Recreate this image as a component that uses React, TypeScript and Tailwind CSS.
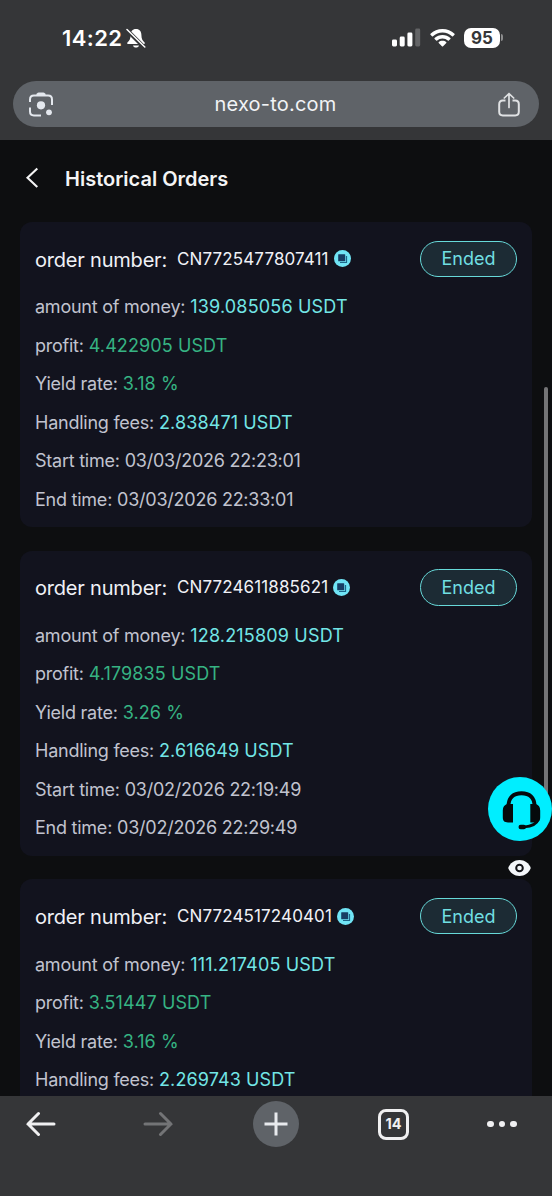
import * as React from 'react';

type Order = {
  id: string;
  amount: string;
  profit: string;
  rate: string;
  fees: string;
  start?: string;
  end?: string;
};

const orders: Order[] = [
  {
    id: 'CN7725477807411',
    amount: '139.085056 USDT',
    profit: '4.422905 USDT',
    rate: '3.18 %',
    fees: '2.838471 USDT',
    start: '03/03/2026 22:23:01',
    end: '03/03/2026 22:33:01',
  },
  {
    id: 'CN7724611885621',
    amount: '128.215809 USDT',
    profit: '4.179835 USDT',
    rate: '3.26 %',
    fees: '2.616649 USDT',
    start: '03/02/2026 22:19:49',
    end: '03/02/2026 22:29:49',
  },
  {
    id: 'CN7724517240401',
    amount: '111.217405 USDT',
    profit: '3.51447 USDT',
    rate: '3.16 %',
    fees: '2.269743 USDT',
  },
];

function StatusBar() {
  return (
    <div className="flex h-[81px] items-start justify-between pt-[24px] pr-[49px] pl-[62px] text-white">
      <div className="flex h-[28px] items-center">
        <span className="w-[64px] text-[22px] font-semibold tracking-[0.4px] whitespace-nowrap">14:22</span>
        <svg width="20" height="21" viewBox="0 0 20 21" fill="none">
          <path
            d="M10 1C6.400 1 4.600 3.600 4.600 7c0 4-1.200 5.600-3 7.300-.9.900-.5 1.700.5 1.700h15.800c1 0 1.400-.8.500-1.700-1.800-1.700-3-3.300-3-7.300C15.400 3.600 13.600 1 10 1zM7 17.400c.4 1.400 1.500 2.200 3 2.200s2.600-.8 3-2.200z"
            fill="#fff"
          />
          <path d="M.3 1.500 18.500 19.700" stroke="#353638" strokeWidth="4" />
          <path d="M1 1.500 18.800 19" stroke="#fff" strokeWidth="1.500" strokeLinecap="round" />
        </svg>
      </div>
      <div className="flex h-[27px] items-center">
        <svg width="29" height="19" viewBox="0 0 29 19" fill="#fff">
          <rect x="0" y="11.500" width="5" height="7" rx="1.400" />
          <rect x="7.700" y="8.500" width="5" height="10" rx="1.400" />
          <rect x="15.400" y="4.500" width="5" height="14" rx="1.400" />
          <rect x="23.200" y="0.500" width="5" height="18" rx="1.400" fillOpacity=".23" />
        </svg>
        <svg className="ml-[9px]" width="25" height="18" viewBox="0 0 25 18" fill="#fff">
          <path d="M12.500 0C7.800 0 3.600 1.800.5 4.700c-.3.300-.3.700 0 1l1.500 1.500c.3.300.7.300 1 0C5.500 4.900 8.800 3.500 12.500 3.500s7 1.400 9.500 3.700c.3.300.7.300 1 0l1.500-1.500c.3-.3.300-.7 0-1C21.400 1.800 17.200 0 12.500 0z" />
          <path d="M12.500 6c-3 0-5.800 1.100-7.900 3-.3.300-.3.700 0 1l1.600 1.500c.3.300.7.300 1 0 1.400-1.200 3.200-2 5.300-2s3.900.8 5.300 2c.3.300.7.300 1 0l1.600-1.500c.3-.3.300-.7 0-1-2.100-1.900-4.900-3-7.900-3z" />
          <path d="M12.500 11.800c-1.500 0-2.800.5-3.800 1.400-.3.300-.3.600 0 .9l3.200 3.200c.4.400.8.400 1.200 0l3.200-3.200c.3-.3.300-.6 0-.9-1-.9-2.300-1.400-3.800-1.400z" />
        </svg>
        <div className="ml-[9px] flex h-[20px] w-[36px] items-center justify-center rounded-[7px] bg-white">
          <span className="pt-px text-[17px] leading-[19px] font-bold text-[#353638]">95</span>
        </div>
        <span className="ml-px h-[7px] w-[2px] rounded-r-full bg-[#8b8c8d]" />
      </div>
    </div>
  );
}

function AddressBar() {
  return (
    <div className="mx-[13px] flex h-[46px] items-center justify-between rounded-full bg-[#5f6368] pr-[19px] pl-[16px]">
      <svg width="24" height="25" viewBox="0 0 24 25" fill="none">
        <path
          d="M1 10V7.500C1 5.200 2.600 3.600 4.900 3.600h14.200C21.400 3.600 23 5.200 23 7.500V13M1 15.500v4c0 2.300 1.600 3.900 3.900 3.900H12"
          stroke="#e4e8ee"
          strokeWidth="2"
        />
        <path d="M6.500 4 8.200 1.300C8.600.700 9 .5 9.700.5h4.600c.7 0 1.100.2 1.500.8L17.500 4z" fill="#e4e8ee" />
        <circle cx="12" cy="13.300" r="4.100" fill="#e4e8ee" />
        <circle cx="20" cy="20.300" r="2.900" fill="#e4e8ee" />
      </svg>
      <span className="text-[20px] tracking-[0.22px] text-[#f1f3f6]">nexo-to.com</span>
      <svg width="22" height="25" viewBox="0 0 22 25" fill="none" stroke="#e0e2e4" strokeWidth="2">
        <path d="M7.500 8.600H4.800C2.500 8.600 1.200 9.900 1.200 12.200v7.600c0 2.300 1.300 3.600 3.600 3.600h12.400c2.300 0 3.600-1.300 3.600-3.600v-7.600c0-2.300-1.300-3.600-3.600-3.600h-2.700" />
        <path d="M11 15.500V2M6.300 6 11 1.600 15.700 6" strokeLinecap="round" strokeWidth="1.700" />
      </svg>
    </div>
  );
}

function CopyIcon() {
  return (
    <svg width="17" height="17" viewBox="0 0 17 17">
      <circle cx="8.500" cy="8.500" r="8.500" fill="#70e4f5" />
      <path d="M6 12.500h6.500V6" fill="none" stroke="#1c6689" strokeWidth="1.200" />
      <rect x="4.200" y="4.200" width="7" height="7" rx=".5" fill="#173d63" />
    </svg>
  );
}

function Row({ label, value, tone }: { label: string; value: string; tone: string }) {
  return (
    <div className="flex h-[38.5px] items-center gap-[5px] text-[18px] whitespace-nowrap">
      <span className="tracking-[-0.24px] text-[#c1c3cf]">{label}</span>
      <span className={tone}>{value}</span>
    </div>
  );
}

function OrderCard({ order }: { order: Order }) {
  return (
    <div className="mx-[20px] h-[305px] shrink-0 rounded-[12px] bg-[#12131e] px-[15px] pt-[18.5px]">
      <div className="mb-[10.5px] flex h-[36.5px] items-center">
        <span className="w-[142px] pt-[2px] text-[20px] tracking-[-0.2px] whitespace-nowrap text-[#f0f1f6]">
          order number:
        </span>
        <span className="pt-px text-[17px] tracking-[0.12px] whitespace-nowrap text-[#f0f1f6]">{order.id}</span>
        <span className="ml-[5px]">
          <CopyIcon />
        </span>
        <span className="ml-auto flex h-full w-[97px] items-center justify-center rounded-full border-[1.5px] border-[#67d9d9] bg-[#1c2b34] text-[18px] text-[#70dfe2]">
          Ended
        </span>
      </div>
      <Row label="amount of money:" value={order.amount} tone="tracking-[0.18px] text-[#72e6e6]" />
      <Row label="profit:" value={order.profit} tone="tracking-[0.1px] text-[#36b383]" />
      <Row label="Yield rate:" value={order.rate} tone="tracking-[0.1px] text-[#36b383]" />
      <Row label="Handling fees:" value={order.fees} tone="tracking-[0.1px] text-[#72e6e6]" />
      {order.start && <Row label="Start time:" value={order.start} tone="tracking-[-0.24px] text-[#c1c3cf]" />}
      {order.end && <Row label="End time:" value={order.end} tone="tracking-[-0.24px] text-[#c1c3cf]" />}
    </div>
  );
}

function SupportButton() {
  return (
    <div className="absolute top-[777px] left-[488px] size-[64px] rounded-full bg-[#00eeff]">
      <svg width="64" height="64" viewBox="0 0 64 64" fill="none">
        <path d="M20.500 29C20.500 20.500 25.500 16.200 33.500 16.200S46.500 20.500 46.500 29" stroke="#050a0c" strokeWidth="3.900" />
        <path d="M50.500 42c-1.500 4.500-6 7.300-14.500 8" stroke="#050a0c" strokeWidth="2.700" />
        <rect x="30.500" y="47.800" width="7.500" height="4.400" rx="2.200" fill="#050a0c" />
        <path
          d="M25 27v18.500h-5c-3.600 0-5.200-1.800-5.200-5.200v-6.800c0-3.600 1.700-5.500 4.200-6.500zM42.300 27v18.500H47c3.600 0 5.200-1.800 5.200-5.200v-6.800c0-3.600-1.700-5.500-4.200-6.500z"
          fill="#050a0c"
        />
      </svg>
    </div>
  );
}

function BottomBar() {
  return (
    <div className="h-[100px] w-full shrink-0 bg-[#353638]">
      <div className="flex h-[56px] items-center">
        <svg className="ml-[26px]" width="30" height="26" viewBox="0 0 30 26" fill="none" stroke="#f0f0f1" strokeWidth="3" strokeLinecap="round">
          <path d="M2 13h26M12.500 2.500 2 13l10.500 10.500" />
        </svg>
        <svg className="ml-[87px]" width="30" height="26" viewBox="0 0 30 26" fill="none" stroke="#737476" strokeWidth="3" strokeLinecap="round">
          <path d="M2 13h26M17.500 2.500 28 13 17.500 23.500" />
        </svg>
        <div className="ml-[80px] flex size-[46px] items-center justify-center rounded-full bg-[#5f6368]">
          <svg width="24" height="24" viewBox="0 0 24 24" stroke="#e8eaed" strokeWidth="3">
            <path d="M12 .5v23M.5 12h23" />
          </svg>
        </div>
        <div className="ml-[79px] flex size-[31px] items-center justify-center rounded-[8px] border-[3px] border-[#f0f0f1]">
          <span className="text-[14.5px] font-bold text-[#f0f0f1]">14</span>
        </div>
        <div className="ml-[78px] flex gap-[5px]">
          <span className="size-[6.5px] rounded-full bg-[#f0f0f1]" />
          <span className="size-[6.5px] rounded-full bg-[#f0f0f1]" />
          <span className="size-[6.5px] rounded-full bg-[#f0f0f1]" />
        </div>
      </div>
    </div>
  );
}

export default function App() {
  return (
    <div className="relative flex h-[1196px] w-[552px] flex-col overflow-hidden bg-[#0d0e10] font-['Inter',sans-serif]">
      <header className="h-[140px] shrink-0 bg-[#353638]">
        <StatusBar />
        <AddressBar />
      </header>

      <main className="flex min-h-0 flex-1 flex-col overflow-hidden">
        <div className="flex h-[82px] shrink-0 items-start pt-[24px] pl-[25px]">
          <div className="flex h-[30px] items-center">
            <svg className="mb-[2px]" width="14" height="22" viewBox="0 0 14 22" fill="none" stroke="#f4f4f5" strokeWidth="2.100">
              <path d="M12.300 1.500 2.500 10.700l9.800 9.200" />
            </svg>
            <h1 className="ml-[26px] text-[20px] font-semibold whitespace-nowrap text-[#f4f4f5]">Historical Orders</h1>
          </div>
        </div>
        <div className="flex flex-col gap-[23.67px]">
          {orders.map((order) => (
            <OrderCard key={order.id} order={order} />
          ))}
        </div>
      </main>

      <BottomBar />

      <span className="absolute top-[387px] left-[544px] h-[408px] w-[4px] rounded-full bg-[#747476]" />
      <SupportButton />
      <svg className="absolute top-[860px] left-[508px]" width="23" height="16" viewBox="0 0 23 16">
        <path d="M11.500 0C6.300 0 2 3.200.2 8c1.800 4.800 6.100 8 11.300 8s9.500-3.200 11.300-8C21 3.200 16.700 0 11.500 0z" fill="#f4f7fa" />
        <circle cx="11.500" cy="8" r="3.300" fill="none" stroke="#111216" strokeWidth="2" />
      </svg>
    </div>
  );
}
